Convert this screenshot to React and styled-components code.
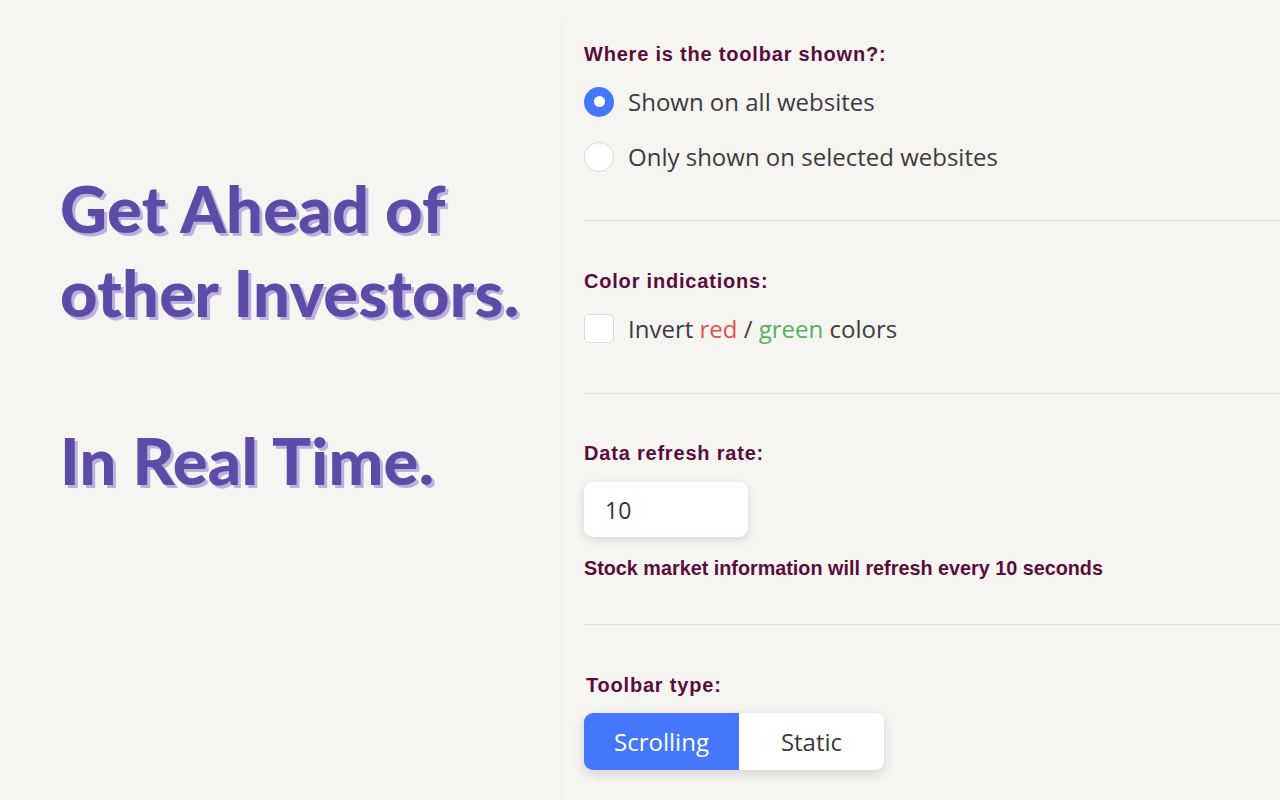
import React, {useState} from 'react';
import styled, {createGlobalStyle} from 'styled-components';

const GlobalStyle = createGlobalStyle`
  html, body {
    margin: 0;
    padding: 0;
    background: #f7f5f1;
  }
  #root {
    height: 800px;
    overflow: hidden;
  }
`

const Page = styled.div`
  display: flex;
  width: 1280px;
  height: 800px;
  background: #f7f5f1;
`

const Hero = styled.div`
  width: 500px;
  padding: 166px 0 0 60px;
`

const HeroTitle = styled.h1`
  margin: 0;
  font-family: "Lato", sans-serif;
  font-weight: 900;
  font-size: 65px;
  line-height: 84px;
  letter-spacing: 0.3px;
  color: #5c4ca8;
  text-shadow: 3px 3px 0 #bcb0df;
`

const Panel = styled.div`
  flex: 1;
  margin-top: 20px;
  padding-left: 23px;
  border-left: 1px solid #f4f2ee;
`

const Section = styled.div`
  padding-top: ${p => p.top}px;
  padding-bottom: ${p => p.bottom}px;
  border-bottom: ${p => p.last ? 'none' : '1px solid #e6e3de'};
`

const Label = styled.div`
  font-family: "Liberation Sans", Arial, sans-serif;
  font-weight: 700;
  font-size: 20px;
  letter-spacing: 0.8px;
  line-height: 22px;
  color: #5a0d3c;
  margin-left: ${p => p.indent || 0}px;
  margin-bottom: ${p => p.gap || 9}px;
`

const OptionRow = styled.label`
  display: flex;
  align-items: center;
  gap: 14px;
  height: 55px;
  font-family: "Open Sans", sans-serif;
  font-size: 24px;
  color: #3b3b3b;
  cursor: pointer;
`

const Radio = styled.span`
  box-sizing: border-box;
  flex: none;
  width: 30px;
  height: 30px;
  border-radius: 50%;
  background: ${p => p.checked ? '#4477fb' : '#fff'};
  border: ${p => p.checked ? 'none' : '1px solid #dedbd6'};
  display: flex;
  align-items: center;
  justify-content: center;
  &::after {
    content: '';
    display: ${p => p.checked ? 'block' : 'none'};
    width: 11px;
    height: 11px;
    border-radius: 50%;
    background: #fff;
  }
`

const Checkbox = styled.span`
  box-sizing: border-box;
  flex: none;
  width: 30px;
  height: 29px;
  border-radius: 5px;
  background: #fff;
  border: 1px solid #dedbd6;
`

const Red = styled.span`
  color: #e0504a;
`

const Green = styled.span`
  color: #55b060;
`

const NumberInput = styled.input`
  box-sizing: border-box;
  display: block;
  width: 164px;
  height: 55px;
  border: none;
  border-radius: 9px;
  background: #fff;
  box-shadow: 0 3px 10px rgba(0, 0, 0, 0.13);
  padding: 0 21px;
  font-family: "Open Sans", sans-serif;
  font-size: 23px;
  color: #333;
  outline: none;
`

const Helper = styled.div`
  margin-top: 20px;
  font-family: "Liberation Sans", Arial, sans-serif;
  font-weight: 700;
  font-size: 19.8px;
  line-height: 22px;
  color: #5a0d3c;
`

const Segmented = styled.div`
  display: inline-flex;
  height: 57px;
  border-radius: 9px;
  overflow: hidden;
  background: #fff;
  box-shadow: 0 4px 12px rgba(0, 0, 0, 0.14);
`

const SegButton = styled.button`
  border: none;
  padding: 0;
  width: ${p => p.w}px;
  background: ${p => p.active ? '#4477fb' : '#fff'};
  color: ${p => p.active ? '#fff' : '#3b3b3b'};
  font-family: "Open Sans", sans-serif;
  font-size: 24px;
  cursor: pointer;
`

export default function App() {
  const [shown, setShown] = useState('all');
  const [type, setType] = useState('scrolling');

  return (
    <Page>
      <GlobalStyle />
      <Hero>
        <HeroTitle>
          Get Ahead of<br />
          other Investors.<br />
          <br />
          In Real Time.
        </HeroTitle>
      </Hero>
      <Panel>
        <Section top={23} bottom={36}>
          <Label>Where is the toolbar shown?:</Label>
          <OptionRow onClick={() => setShown('all')}>
            <Radio checked={shown === 'all'} />
            Shown on all websites
          </OptionRow>
          <OptionRow onClick={() => setShown('selected')}>
            <Radio checked={shown === 'selected'} />
            Only shown on selected websites
          </OptionRow>
        </Section>

        <Section top={49} bottom={37}>
          <Label>Color indications:</Label>
          <OptionRow>
            <Checkbox />
            <span>Invert <Red>red</Red> / <Green>green</Green> colors</span>
          </OptionRow>
        </Section>

        <Section top={48} bottom={45}>
          <Label gap={18}>Data refresh rate:</Label>
          <NumberInput type="text" defaultValue="10" />
          <Helper>Stock market information will refresh every 10 seconds</Helper>
        </Section>

        <Section top={49} bottom={0} last>
          <Label indent={2} gap={17}>Toolbar type:</Label>
          <Segmented>
            <SegButton w={155} active={type === 'scrolling'} onClick={() => setType('scrolling')}>Scrolling</SegButton>
            <SegButton w={145} active={type === 'static'} onClick={() => setType('static')}>Static</SegButton>
          </Segmented>
        </Section>
      </Panel>
    </Page>
  );
}
